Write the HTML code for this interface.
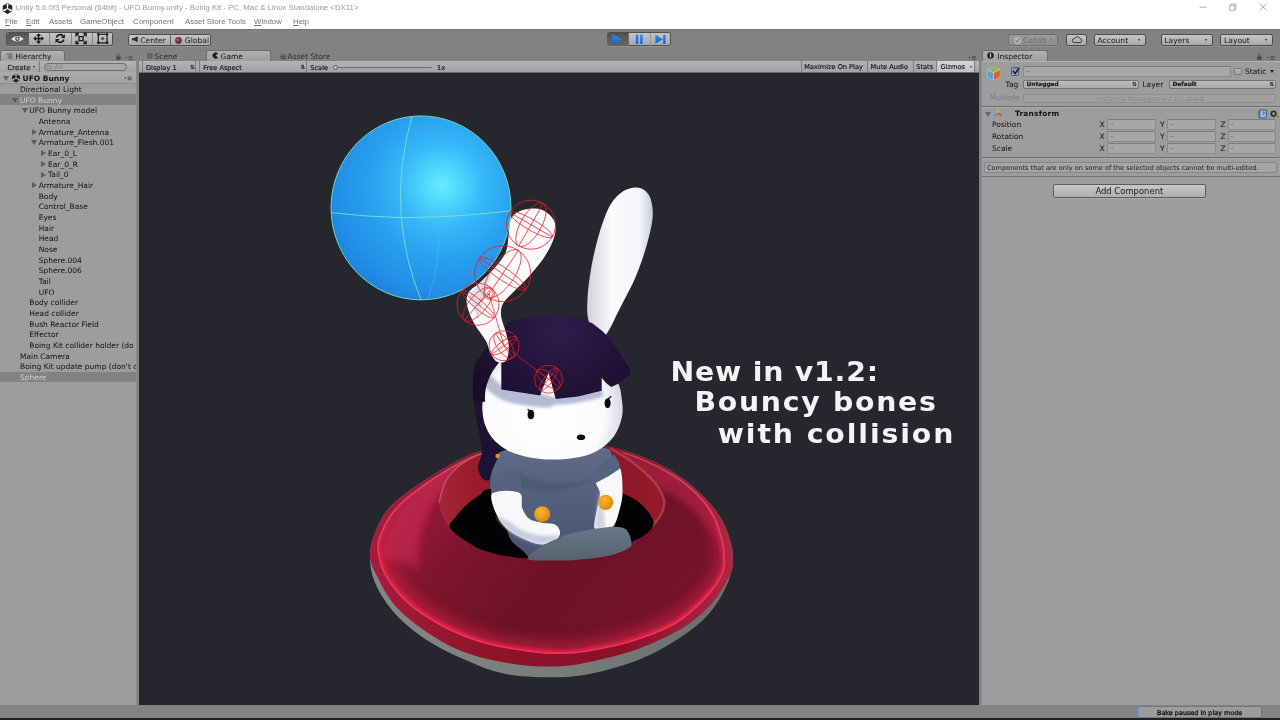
<!DOCTYPE html>
<html lang="en">
<head>
<meta charset="utf-8">
<title>Unity 5.6.0f3 Personal (64bit) - UFO Bunny.unity - Boing Kit</title>
<style>
html,body{margin:0;padding:0}
body{width:1280px;height:720px;overflow:hidden;position:relative;background:#828282;
  font-family:"DejaVu Sans","Liberation Sans",sans-serif;font-size:7.5px;color:#101010;line-height:1;filter:blur(0.35px)}
#root{position:absolute;left:0;top:0;width:1280px;height:720px;will-change:transform;opacity:.999}
.a{position:absolute;white-space:nowrap}
/* window title + menu */
#titlebar{left:0;top:0;width:1280px;height:28.5px;background:#fff}
#title{left:15.5px;top:3px;font-family:"Liberation Sans",sans-serif;font-size:7.84px;color:#9a9a9a;letter-spacing:0px;line-height:10px}
.menu{top:16.5px;font-family:"Liberation Sans",sans-serif;font-size:7.85px;color:#727272;line-height:10px}
.menu u{text-decoration-thickness:0.6px;text-underline-offset:1px}
/* toolbar */
.btn{box-sizing:border-box;border:0.7px solid #4e4e4e;border-radius:2.2px;
  background:linear-gradient(#c6c6c6,#a8a8a8);box-shadow:0 0.6px 0 rgba(255,255,255,.25)}
.btn.on{background:linear-gradient(#5e5e5e,#6b6b6b)}
.tbtxt{font-size:7.6px;line-height:10px;color:#161616}
/* panels */
.panel{background:#9d9d9d}
.tab{box-sizing:border-box;height:11px;border:0.7px solid #6d6d6d;border-bottom:none;border-radius:2.5px 2.5px 0 0;
  background:linear-gradient(#b1b1b1,#9f9f9f)}
.tabtxt{font-size:7.5px;line-height:10px;color:#141414}
.tabtxt.off{color:#2e2e2e}
.ptool{height:11.8px;background:linear-gradient(#b4b4b4,#a2a2a2);border-bottom:0.7px solid #6c6c6c;box-sizing:border-box}
.mini{font-size:6.6px;line-height:9px;color:#141414;-webkit-text-stroke:0.18px #222}
.sep{width:0.7px;background:#7c7c7c;height:10.5px}
/* hierarchy */
.row{left:0;width:136px;height:10.67px}
.row span{position:absolute;top:1.2px;line-height:10.67px;font-size:7.5px;white-space:nowrap}
.sel{background:#828282}
.sel span{color:#d0d0d0}
.tri{position:absolute;width:0;height:0}
.tri.d{border-left:3px solid transparent;border-right:3px solid transparent;border-top:5px solid #5a5a5a}
.tri.r{border-top:3px solid transparent;border-bottom:3px solid transparent;border-left:5px solid #5e5e5e}
/* inspector */
.fld{box-sizing:border-box;border:0.7px solid #8b8b8b;border-top-color:#7c7c7c;background:#a7a7a7;height:10.4px}
.dd{box-sizing:border-box;border:0.7px solid #747474;border-radius:2px;background:linear-gradient(#bdbdbd,#a9a9a9);height:9.6px}
.lab{font-size:7.5px;line-height:10px;color:#111}
</style>
</head>
<body>
<div id="root">

<!-- ===== Window title bar + menu ===== -->
<div class="a" id="titlebar"></div>
<svg class="a" style="left:1px;top:2px" width="13" height="13" viewBox="0 0 26 26">
  <path d="M13 2 L22.5 7.5 L22.5 18.5 L13 24 L3.5 18.5 L3.5 7.5 Z" fill="#222"/>
  <path d="M13 13 L13 3.5 M13 13 L21 17.6 M13 13 L5 17.6" stroke="#fff" stroke-width="2.2" fill="none"/>
  <path d="M13 3.5 l-2.6 3.6 M13 3.5 l2.6 3.6 M21 17.6 l-4.4 -.3 M21 17.6 l-1.8 -4 M5 17.6 l4.4 -.3 M5 17.6 l1.8 -4" stroke="#fff" stroke-width="1.6"/>
</svg>
<div class="a" id="title">Unity 5.6.0f3 Personal (64bit) - UFO Bunny.unity - Boing Kit - PC, Mac &amp; Linux Standalone &lt;DX11&gt;</div>
<div class="a menu" style="left:5px"><u>F</u>ile</div>
<div class="a menu" style="left:26px"><u>E</u>dit</div>
<div class="a menu" style="left:49px">Assets</div>
<div class="a menu" style="left:80px">GameObject</div>
<div class="a menu" style="left:133px">Component</div>
<div class="a menu" style="left:185px">Asset Store Tools</div>
<div class="a menu" style="left:254px"><u>W</u>indow</div>
<div class="a menu" style="left:293px"><u>H</u>elp</div>
<!-- window controls -->
<svg class="a" style="left:1190px;top:0" width="90" height="16" viewBox="0 0 90 16">
  <path d="M9.5 7.2 h7" stroke="#a8a8a8" stroke-width="0.9"/>
  <path d="M39.5 5.5 h5 v5 h-5 z M41 5.5 v-1.5 h5 v5 h-1.5" stroke="#a0a0a0" stroke-width="0.8" fill="none"/>
  <path d="M70 3.8 l6.5 6.5 M76.5 3.8 l-6.5 6.5" stroke="#9a9a9a" stroke-width="0.9"/>
</svg>

<!-- ===== Main toolbar ===== -->
<div class="a" style="left:0;top:28.5px;width:1280px;height:0.8px;background:#777"></div>
<!-- transform tools -->
<div class="a btn" style="left:6.4px;top:32.3px;width:106.4px;height:13.8px"></div>
<div class="a" style="left:6.9px;top:32.8px;width:21.8px;height:12.8px;border-radius:2px 0 0 2px;background:linear-gradient(#545454,#676767)"></div>
<div class="a" style="left:49.3px;top:33px;width:0.7px;height:12.4px;background:#858585"></div>
<div class="a" style="left:71px;top:33px;width:0.7px;height:12.4px;background:#858585"></div>
<div class="a" style="left:92.3px;top:33px;width:0.7px;height:12.4px;background:#858585"></div>
<svg class="a" style="left:6.4px;top:32.3px" width="106.4" height="13.8" viewBox="0 0 106.4 13.8">
  <!-- eye (view tool, active) -->
  <path d="M5.2 6.9 Q11.4 1.3 17.6 6.9 Q11.4 12.3 5.2 6.9 Z" fill="#ececec"/>
  <circle cx="11.4" cy="6.8" r="2.4" fill="#555"/><circle cx="11.4" cy="6.8" r="1" fill="#e4e4e4"/>
  <!-- move -->
  <g fill="#1a1a1a">
    <rect x="28.4" y="5.85" width="8.4" height="1.5"/><rect x="31.85" y="2.4" width="1.5" height="8.4"/>
    <path d="M32.6 1.3 l-2.4 2.6 h4.8z M32.6 11.9 l-2.4 -2.6 h4.8z M27.3 6.6 l2.6 -2.4 v4.8z M37.9 6.6 l-2.6 -2.4 v4.8z"/>
  </g>
  <!-- rotate -->
  <g stroke="#1a1a1a" stroke-width="1.7" fill="none">
    <path d="M50.4 5.4 A4 4 0 0 1 57 3.8"/><path d="M58 7.6 A4 4 0 0 1 51.4 9.2"/>
  </g>
  <path d="M58.9 1.9 v4 h-4z M49.5 11.1 v-4 h4z" fill="#1a1a1a"/>
  <!-- scale -->
  <g stroke="#1a1a1a" fill="none">
    <rect x="73.1" y="4.6" width="4" height="4" stroke-width="1.3"/>
    <path d="M72.4 3.9 l-1.7 -1.7 M77.8 3.9 l1.7 -1.7 M72.4 9.3 l-1.7 1.7 M77.8 9.3 l1.7 1.7" stroke-width="1.3"/>
    <path d="M70 4.4 v-2.9 h2.9 M80.2 4.4 v-2.9 h-2.9 M70 8.8 v2.9 h2.9 M80.2 8.8 v2.9 h-2.9" stroke-width="1.3"/>
  </g>
  <!-- rect -->
  <rect x="92.3" y="2.3" width="8.8" height="8.6" fill="none" stroke="#1a1a1a" stroke-width="1.2"/>
  <circle cx="96.7" cy="6.6" r="1.7" fill="#5a5a5a"/>
  <g fill="#1a1a1a"><rect x="91.2" y="1.2" width="2.2" height="2.2"/><rect x="100" y="1.2" width="2.2" height="2.2"/><rect x="91.2" y="9.8" width="2.2" height="2.2"/><rect x="100" y="9.8" width="2.2" height="2.2"/></g>
</svg>
<!-- pivot buttons -->
<div class="a btn" style="left:127.5px;top:33.8px;width:83.6px;height:12px"></div>
<div class="a" style="left:169.7px;top:34.3px;width:0.7px;height:11px;background:#666"></div>
<svg class="a" style="left:130px;top:35px" width="10" height="9" viewBox="0 0 10 9"><path d="M2 3 h2.4 l2.6 -1.8 v6 l-2.6 -1.8 h-2.4z" fill="#333"/><path d="M7.6 2 v4.6" stroke="#333" stroke-width="0.9"/></svg>
<div class="a tbtxt" style="left:140.3px;top:35.5px">Center</div>
<svg class="a" style="left:173.6px;top:35.5px" width="9" height="9" viewBox="0 0 9 9"><circle cx="4.5" cy="4.5" r="3.4" fill="#7c2c38"/><circle cx="3.6" cy="3.6" r="1.6" fill="#9a5560"/></svg>
<div class="a tbtxt" style="left:184.8px;top:35.5px">Global</div>
<!-- play controls -->
<div class="a btn" style="left:606.8px;top:32.1px;width:63.8px;height:14.4px"></div>
<div class="a" style="left:607.2px;top:32.5px;width:20.8px;height:13.6px;border-radius:2px 0 0 2px;background:linear-gradient(#505050,#666)"></div>
<div class="a" style="left:628px;top:32.6px;width:0.7px;height:13.4px;background:#6a6a6a"></div>
<div class="a" style="left:649.6px;top:32.8px;width:0.7px;height:13px;background:#949494"></div>
<svg class="a" style="left:606.8px;top:32.3px" width="64" height="14.4" viewBox="0 0 64 14.4">
  <defs><linearGradient id="gPl" x1="0" y1="0" x2="0" y2="1"><stop offset="0" stop-color="#2a8cff"/><stop offset="1" stop-color="#1560dc"/></linearGradient></defs>
  <path d="M5.3 2.3 L15.4 7.2 L5.3 12.1 Z" fill="url(#gPl)"/>
  <rect x="28.8" y="2.6" width="2.6" height="9.2" fill="url(#gPl)"/><rect x="33.2" y="2.6" width="2.4" height="9.2" fill="url(#gPl)"/>
  <path d="M48.4 2.6 L56 7.2 L48.4 11.8 Z" fill="url(#gPl)"/><rect x="56.2" y="2.6" width="2.4" height="9.2" fill="url(#gPl)"/>
</svg>
<!-- right side buttons -->
<div class="a btn" style="left:1007.5px;top:33.8px;width:50.5px;height:12px;background:linear-gradient(#9a9a9a,#8e8e8e);border-color:#6f6f6f"></div>
<svg class="a" style="left:1012.5px;top:35.5px" width="9" height="9" viewBox="0 0 9 9"><circle cx="4.5" cy="4.5" r="3.7" fill="#b4b4b4"/><path d="M2.6 4.4 l1.5 1.6 l2.6 -3.4" stroke="#808080" stroke-width="1.2" fill="none"/></svg>
<div class="a tbtxt" style="left:1023px;top:35.5px;color:#6f6f6f">Collab</div>
<div class="a tri d" style="left:1050px;top:39.3px;border-left-width:1.8px;border-right-width:1.8px;border-top-width:2.6px;border-top-color:#6f6f6f"></div>
<div class="a btn" style="left:1065.6px;top:33.8px;width:21.6px;height:12px"></div>
<svg class="a" style="left:1070.5px;top:35px" width="12" height="9" viewBox="0 0 12 9"><path d="M3.2 7.6 H9 A2 2 0 0 0 9.2 3.7 A3 3 0 0 0 3.6 3.6 A2 2 0 0 0 3.2 7.6 Z" fill="none" stroke="#2a2a2a" stroke-width="0.9"/></svg>
<div class="a btn" style="left:1093.6px;top:33.8px;width:52.6px;height:12px"></div>
<div class="a tbtxt" style="left:1097.5px;top:35.5px">Account</div>
<div class="a tri d" style="left:1138px;top:38.6px;border-left-width:1.7px;border-right-width:1.7px;border-top-width:2.4px;border-top-color:#222"></div>
<div class="a btn" style="left:1160.5px;top:33.8px;width:52.6px;height:12px"></div>
<div class="a tbtxt" style="left:1164.3px;top:35.5px">Layers</div>
<div class="a tri d" style="left:1204.6px;top:38.6px;border-left-width:1.7px;border-right-width:1.7px;border-top-width:2.4px;border-top-color:#222"></div>
<div class="a btn" style="left:1220px;top:33.8px;width:53px;height:12px"></div>
<div class="a tbtxt" style="left:1224px;top:35.5px">Layout</div>
<div class="a tri d" style="left:1264.6px;top:38.6px;border-left-width:1.7px;border-right-width:1.7px;border-top-width:2.4px;border-top-color:#222"></div>

<!--TOOLBAR_END-->

<!-- ===== Hierarchy panel ===== -->
<div class="a tab" style="left:0;top:50.3px;width:65px"></div>
<svg class="a" style="left:5.5px;top:52.6px" width="7" height="7" viewBox="0 0 7 7"><path d="M0.4 1 h6.2 M1.6 3 h5 M1.6 5 h5" stroke="#555" stroke-width="1"/></svg>
<div class="a tabtxt" style="left:15.3px;top:52.2px">Hierarchy</div>
<svg class="a" style="left:115px;top:53px" width="22" height="8" viewBox="0 0 22 8"><rect x="1.2" y="3.4" width="4.4" height="3.4" fill="#4a4a4a"/><path d="M2.2 3.4 v-1 a1.2 1.2 0 0 1 2.4 0 v1" fill="none" stroke="#4a4a4a" stroke-width="0.8"/><path d="M10 4.2 l1.2 1.4 l1.2 -1.4z" fill="#444"/><path d="M13.6 3.6 h4 M13.6 5 h4 M13.6 6.4 h4" stroke="#4c4c4c" stroke-width="0.8"/></svg>
<div class="a panel" style="left:0;top:61px;width:136px;height:643.5px"></div>
<div class="a" style="left:136px;top:61px;width:0.8px;height:643.5px;background:#8c8c8c"></div>
<div class="a ptool" style="left:0;top:61px;width:136px"></div>
<div class="a mini" style="left:7.5px;top:63.6px;font-size:6.9px">Create</div>
<div class="a tri d" style="left:32.6px;top:66.2px;border-left-width:1.5px;border-right-width:1.5px;border-top-width:2.2px;border-top-color:#333"></div>
<div class="a sep" style="left:38.6px;top:61.3px"></div>
<div class="a" style="left:43.6px;top:62.5px;width:83.5px;height:8.8px;box-sizing:border-box;border:0.7px solid #6e6e6e;border-radius:4.2px;background:#a9a9a9"></div>
<svg class="a" style="left:46px;top:63.8px" width="9" height="7" viewBox="0 0 9 7"><circle cx="2.6" cy="2.8" r="1.7" fill="none" stroke="#7a7a7a" stroke-width="0.7"/><path d="M3.8 4 l1.4 1.6" stroke="#7a7a7a" stroke-width="0.7"/><path d="M5.6 2.4 l1 1.3 l1 -1.3z" fill="#7a7a7a"/></svg>
<div class="a mini" style="left:54.6px;top:62.6px;color:#838383;font-size:6.9px;-webkit-text-stroke:0">All</div>
<div class="a" style="left:0;top:72.3px;width:136px;height:11.6px;background:linear-gradient(#ababab,#a3a3a3);border-bottom:0.6px solid #8c8c8c;box-sizing:border-box"></div>
<div class="a tri d" style="left:3px;top:75.8px;border-top-color:#666"></div>
<svg class="a" style="left:11.4px;top:72.8px" width="10" height="10.4" viewBox="0 0 26 27"><path d="M13 2 L23 7.8 L23 19.2 L13 25 L3 19.2 L3 7.8 Z" fill="#1c1c1c"/><path d="M13 13.5 L13 3.6 M13 13.5 L21.6 18.4 M13 13.5 L4.4 18.4" stroke="#c8c8c8" stroke-width="2.4" fill="none"/><path d="M13 3.6 l-2.8 3.8 M13 3.6 l2.8 3.8 M21.6 18.4 l-4.6 -.4 M21.6 18.4 l-1.9 -4.2 M4.4 18.4 l4.6 -.4 M4.4 18.4 l1.9 -4.2" stroke="#c8c8c8" stroke-width="1.7"/></svg>
<div class="a" style="left:22.6px;top:74px;font-weight:bold;font-size:7.5px;line-height:10.67px">UFO Bunny</div>
<svg class="a" style="left:122.5px;top:75.6px" width="10" height="5" viewBox="0 0 10 5"><path d="M1 1.4 l1.2 1.5 l1.2 -1.5z" fill="#444"/><path d="M4.6 0.9 h4 M4.6 2.3 h4 M4.6 3.7 h4" stroke="#4c4c4c" stroke-width="0.8"/></svg>
<div class="a row" style="top:83.70px;overflow:hidden"><span style="left:20.0px">Directional Light</span></div>
<div class="a row sel" style="top:94.37px;overflow:hidden"><i class="tri d" style="left:12.4px;top:3.4px"></i><span style="left:20.0px">UFO Bunny</span></div>
<div class="a row" style="top:105.03px;overflow:hidden"><i class="tri d" style="left:21.7px;top:3.4px"></i><span style="left:29.3px">UFO Bunny model</span></div>
<div class="a row" style="top:115.70px;overflow:hidden"><span style="left:38.7px">Antenna</span></div>
<div class="a row" style="top:126.37px;overflow:hidden"><i class="tri r" style="left:31.7px;top:2.6px"></i><span style="left:38.7px">Armature_Antenna</span></div>
<div class="a row" style="top:137.04px;overflow:hidden"><i class="tri d" style="left:31.1px;top:3.4px"></i><span style="left:38.7px">Armature_Flesh.001</span></div>
<div class="a row" style="top:147.70px;overflow:hidden"><i class="tri r" style="left:41.0px;top:2.6px"></i><span style="left:48.0px">Ear_0_L</span></div>
<div class="a row" style="top:158.37px;overflow:hidden"><i class="tri r" style="left:41.0px;top:2.6px"></i><span style="left:48.0px">Ear_0_R</span></div>
<div class="a row" style="top:169.04px;overflow:hidden"><i class="tri r" style="left:41.0px;top:2.6px"></i><span style="left:48.0px">Tail_0</span></div>
<div class="a row" style="top:179.70px;overflow:hidden"><i class="tri r" style="left:31.7px;top:2.6px"></i><span style="left:38.7px">Armature_Hair</span></div>
<div class="a row" style="top:190.37px;overflow:hidden"><span style="left:38.7px">Body</span></div>
<div class="a row" style="top:201.04px;overflow:hidden"><span style="left:38.7px">Control_Base</span></div>
<div class="a row" style="top:211.70px;overflow:hidden"><span style="left:38.7px">Eyes</span></div>
<div class="a row" style="top:222.37px;overflow:hidden"><span style="left:38.7px">Hair</span></div>
<div class="a row" style="top:233.04px;overflow:hidden"><span style="left:38.7px">Head</span></div>
<div class="a row" style="top:243.70px;overflow:hidden"><span style="left:38.7px">Nose</span></div>
<div class="a row" style="top:254.37px;overflow:hidden"><span style="left:38.7px">Sphere.004</span></div>
<div class="a row" style="top:265.04px;overflow:hidden"><span style="left:38.7px">Sphere.006</span></div>
<div class="a row" style="top:275.71px;overflow:hidden"><span style="left:38.7px">Tail</span></div>
<div class="a row" style="top:286.37px;overflow:hidden"><span style="left:38.7px">UFO</span></div>
<div class="a row" style="top:297.04px;overflow:hidden"><span style="left:29.3px">Body collider</span></div>
<div class="a row" style="top:307.71px;overflow:hidden"><span style="left:29.3px">Head collider</span></div>
<div class="a row" style="top:318.37px;overflow:hidden"><span style="left:29.3px">Bush Reactor Field</span></div>
<div class="a row" style="top:329.04px;overflow:hidden"><span style="left:29.3px">Effector</span></div>
<div class="a row" style="top:339.71px;overflow:hidden"><span style="left:29.3px">Boing Kit collider holder (do</span></div>
<div class="a row" style="top:350.38px;overflow:hidden"><span style="left:20.0px">Main Camera</span></div>
<div class="a row" style="top:361.04px;overflow:hidden"><span style="left:20.0px">Boing Kit update pump (don&#39;t c</span></div>
<div class="a row sel" style="top:371.71px;overflow:hidden"><span style="left:20.0px">Sphere</span></div>
<!--HIERARCHY_END-->

<!-- ===== Scene / Game / Asset Store tabs ===== -->
<svg class="a" style="left:146.4px;top:52.4px" width="8" height="8" viewBox="0 0 8 8"><path d="M1 2.4 h6 M1 4 h6 M1 5.6 h6 M2.4 1 v6 M4 1 v6 M5.6 1 v6" stroke="#5a5a5a" stroke-width="0.7"/></svg>
<div class="a tabtxt off" style="left:154.5px;top:52.2px">Scene</div>
<div class="a tab" style="left:205.6px;top:50.3px;width:65.2px"></div>
<svg class="a" style="left:211.6px;top:52.4px" width="7" height="7" viewBox="0 0 7 7"><path d="M6 1.6 A3 3 0 1 0 6 5.4 L3.6 3.5 Z" fill="#1e1e1e"/></svg>
<div class="a tabtxt" style="left:220.6px;top:52.2px">Game</div>
<svg class="a" style="left:278.6px;top:52.6px" width="9" height="8" viewBox="0 0 9 8"><path d="M1 2.6 h6.6 l-0.8 4 h-5z" fill="#585858"/><path d="M2.8 2.6 a1.5 1.6 0 0 1 3 0" fill="none" stroke="#585858" stroke-width="0.8"/></svg>
<div class="a tabtxt off" style="left:287.6px;top:52.2px">Asset Store</div>
<svg class="a" style="left:966px;top:54.6px" width="12" height="6" viewBox="0 0 12 6"><path d="M2.4 2 l1.2 1.5 l1.2 -1.5z" fill="#444"/><path d="M6 1.4 h4 M6 2.8 h4 M6 4.2 h4" stroke="#4c4c4c" stroke-width="0.8"/></svg>
<!-- game toolbar -->
<div class="a ptool" style="left:139px;top:61px;width:840px"></div>
<div class="a sep" style="left:142.3px;top:61.3px"></div>
<div class="a mini" style="left:146px;top:63.5px">Display 1</div>
<div class="a mini" style="left:190px;top:63.3px;font-size:5.6px;color:#333">&#8645;</div>
<div class="a sep" style="left:195.3px;top:61.3px"></div>
<div class="a sep" style="left:198.8px;top:61.3px"></div>
<div class="a mini" style="left:203.3px;top:63.5px">Free Aspect</div>
<div class="a mini" style="left:300.6px;top:63.3px;font-size:5.6px;color:#333">&#8645;</div>
<div class="a sep" style="left:305.6px;top:61.3px"></div>
<div class="a mini" style="left:310.3px;top:63.5px">Scale</div>
<div class="a" style="left:335px;top:66.9px;width:97px;height:1.4px;background:#6e6e6e;border-radius:1px"></div>
<div class="a" style="left:332.6px;top:64.7px;width:5.6px;height:5.6px;box-sizing:border-box;border:0.7px solid #5a5a5a;border-radius:50%;background:#c4c4c4"></div>
<div class="a mini" style="left:437px;top:63.5px">1x</div>
<div class="a sep" style="left:800.6px;top:61.3px"></div>
<div class="a mini" style="left:804.3px;top:63.1px">Maximize On Play</div>
<div class="a sep" style="left:867px;top:61.3px"></div>
<div class="a mini" style="left:870.6px;top:63.1px">Mute Audio</div>
<div class="a sep" style="left:912.6px;top:61.3px"></div>
<div class="a mini" style="left:916.3px;top:63.1px">Stats</div>
<div class="a" style="left:936px;top:61px;width:39.4px;height:10.7px;background:linear-gradient(#d4d4d4,#c2c2c2);border-left:0.7px solid #7c7c7c;border-right:0.7px solid #7c7c7c;box-sizing:border-box"></div>
<div class="a mini" style="left:940.6px;top:63.1px">Gizmos</div>
<div class="a tri d" style="left:969.8px;top:65.8px;border-left-width:1.5px;border-right-width:1.5px;border-top-width:2.2px;border-top-color:#333"></div>
<!-- game viewport -->
<div class="a" style="left:139px;top:72.5px;width:840px;height:632.2px;background:#26262f"></div>
<svg class="a" id="game" style="left:139px;top:72.3px" width="840" height="632.4" viewBox="139 72.3 840 632.4">
<!--ART_BEGIN-->
<defs>
<radialGradient id="gSph" cx="442" cy="186" r="118" gradientUnits="userSpaceOnUse">
 <stop offset="0" stop-color="#66ecff"/><stop offset=".14" stop-color="#52d8fe"/><stop offset=".36" stop-color="#35b8f8"/><stop offset=".62" stop-color="#29a0f0"/><stop offset=".88" stop-color="#2290e8"/><stop offset="1" stop-color="#1e86de"/>
</radialGradient>
<linearGradient id="gUfo" x1="410" y1="470" x2="640" y2="650" gradientUnits="userSpaceOnUse">
 <stop offset="0" stop-color="#a21c3e"/><stop offset=".3" stop-color="#7e152c"/><stop offset=".6" stop-color="#6c1226"/><stop offset="1" stop-color="#74132a"/>
</linearGradient>
<linearGradient id="gBand" x1="380" y1="0" x2="730" y2="0" gradientUnits="userSpaceOnUse">
 <stop offset="0" stop-color="#a41c3a"/><stop offset=".3" stop-color="#8e1428"/><stop offset=".7" stop-color="#8a1226"/><stop offset="1" stop-color="#ac2646"/>
</linearGradient>
<linearGradient id="gWall" x1="440" y1="0" x2="666" y2="0" gradientUnits="userSpaceOnUse">
 <stop offset="0" stop-color="#a42638"/><stop offset=".15" stop-color="#9a1c2c"/><stop offset=".8" stop-color="#8e1626"/><stop offset="1" stop-color="#961a2a"/>
</linearGradient>
<linearGradient id="gFace" x1="0" y1="545" x2="0" y2="660" gradientUnits="userSpaceOnUse">
 <stop offset="0" stop-color="#741226"/><stop offset=".55" stop-color="#7e152a"/><stop offset="1" stop-color="#a81c37"/>
</linearGradient>
<linearGradient id="gBase" x1="380" y1="0" x2="730" y2="0" gradientUnits="userSpaceOnUse">
 <stop offset="0" stop-color="#828684"/><stop offset=".5" stop-color="#787c7a"/><stop offset="1" stop-color="#6a6e6c"/>
</linearGradient>
<linearGradient id="gEarR" x1="590" y1="0" x2="652" y2="0" gradientUnits="userSpaceOnUse">
 <stop offset="0" stop-color="#d4d6e0"/><stop offset=".35" stop-color="#fbfbfd"/><stop offset=".8" stop-color="#f4f5fa"/><stop offset="1" stop-color="#c9cde0"/>
</linearGradient>
<radialGradient id="gHead" cx="545" cy="415" r="85" gradientUnits="userSpaceOnUse">
 <stop offset="0" stop-color="#ffffff"/><stop offset=".7" stop-color="#fbfbfd"/><stop offset="1" stop-color="#c9cce0"/>
</radialGradient>
<radialGradient id="gHair" cx="560" cy="330" r="95" gradientUnits="userSpaceOnUse">
 <stop offset="0" stop-color="#2f1c4c"/><stop offset=".55" stop-color="#23143a"/><stop offset="1" stop-color="#190e2a"/>
</radialGradient>
<linearGradient id="gShirt" x1="0" y1="450" x2="0" y2="555" gradientUnits="userSpaceOnUse">
 <stop offset="0" stop-color="#5d6b89"/><stop offset=".5" stop-color="#535f7b"/><stop offset="1" stop-color="#485470"/>
</linearGradient>
<linearGradient id="gCons" x1="0" y1="527" x2="0" y2="560" gradientUnits="userSpaceOnUse">
 <stop offset="0" stop-color="#6a7788"/><stop offset="1" stop-color="#56626f"/>
</linearGradient>
<linearGradient id="gGlowS" x1="0" y1="446" x2="0" y2="600" gradientUnits="userSpaceOnUse">
 <stop offset="0" stop-color="#d83a5c" stop-opacity=".25"/><stop offset=".4" stop-color="#dc2a50" stop-opacity=".55"/><stop offset=".75" stop-color="#e8244c" stop-opacity="1"/><stop offset="1" stop-color="#ff2a52"/>
</linearGradient>
<linearGradient id="gGlowL" x1="0" y1="446" x2="0" y2="600" gradientUnits="userSpaceOnUse">
 <stop offset="0" stop-color="#d8667e" stop-opacity=".55"/><stop offset=".4" stop-color="#e4506e" stop-opacity=".75"/><stop offset=".72" stop-color="#f43058" stop-opacity="1"/><stop offset="1" stop-color="#f62e56"/>
</linearGradient>
<radialGradient id="gOr" cx=".4" cy=".35" r=".7"><stop offset="0" stop-color="#ffb52e"/><stop offset="1" stop-color="#d8860f"/></radialGradient>
<filter id="bl1" x="-10%" y="-10%" width="120%" height="120%"><feGaussianBlur stdDeviation="1.6"/></filter>
<filter id="bl2" x="-10%" y="-10%" width="120%" height="120%"><feGaussianBlur stdDeviation="3"/></filter>
<filter id="bl3" x="-10%" y="-10%" width="120%" height="120%"><feGaussianBlur stdDeviation="6"/></filter>
<filter id="bl05" x="-5%" y="-5%" width="110%" height="110%"><feGaussianBlur stdDeviation="0.5"/></filter>
</defs>
<path d="M370.0 556.0 C370.0 548.2 371.7 542.0 374.4 534.7 C377.1 527.4 381.7 518.1 386.0 512.0 C390.3 505.9 394.9 502.7 400.0 498.3 C405.1 493.9 411.1 489.7 416.7 485.8 C422.2 481.9 427.8 478.5 433.3 475.0 C438.9 471.5 444.4 468.1 450.0 465.0 C455.6 461.9 461.2 459.0 466.7 456.7 C472.1 454.4 474.6 452.5 482.7 451.0 C490.8 449.5 504.1 448.3 515.0 447.5 C525.9 446.7 537.2 446.6 548.0 446.3 C558.8 446.1 570.0 445.9 580.0 446.0 C590.0 446.1 597.7 444.9 608.0 446.7 C618.3 448.5 630.5 452.3 641.7 456.7 C652.9 461.1 665.3 467.2 675.0 473.3 C684.7 479.4 692.5 486.1 700.0 493.3 C707.5 500.5 715.0 508.9 720.0 516.7 C725.0 524.5 727.8 532.8 730.0 540.0 C732.2 547.2 733.5 552.5 733.0 560.0 C732.5 567.5 731.0 576.0 727.0 585.0 C723.0 594.0 716.8 605.2 709.0 614.0 C701.2 622.8 691.5 630.4 680.0 638.0 C668.5 645.6 654.5 653.6 640.0 659.5 C625.5 665.4 607.2 670.5 593.0 673.5 C578.8 676.5 569.8 677.4 555.0 677.5 C540.2 677.6 520.1 677.2 504.4 674.0 C488.7 670.8 474.8 664.6 461.0 658.4 C447.2 652.2 432.8 644.7 421.4 636.8 C410.0 628.9 400.3 620.2 392.5 611.0 C384.7 601.8 378.1 590.8 374.4 581.6 C370.6 572.4 370.0 563.8 370.0 556.0Z" fill="url(#gBase)"/>
<path d="M370.0 556.0 C369.7 549.4 371.7 542.0 374.4 534.7 C377.1 527.4 381.7 518.1 386.0 512.0 C390.3 505.9 394.9 502.7 400.0 498.3 C405.1 493.9 411.1 489.7 416.7 485.8 C422.2 481.9 427.8 478.5 433.3 475.0 C438.9 471.5 444.4 468.1 450.0 465.0 C455.6 461.9 461.2 459.0 466.7 456.7 C472.1 454.4 474.6 452.5 482.7 451.0 C490.8 449.5 504.1 448.3 515.0 447.5 C525.9 446.7 537.2 446.6 548.0 446.3 C558.8 446.1 570.0 445.9 580.0 446.0 C590.0 446.1 597.7 444.9 608.0 446.7 C618.3 448.5 630.5 452.3 641.7 456.7 C652.9 461.1 665.3 467.2 675.0 473.3 C684.7 479.4 692.5 486.1 700.0 493.3 C707.5 500.5 715.0 508.9 720.0 516.7 C725.0 524.5 727.8 532.8 730.0 540.0 C732.2 547.2 732.9 554.3 733.0 560.0 C733.1 565.7 733.9 566.8 730.5 574.0 C727.1 581.2 720.3 594.1 712.5 603.0 C704.7 611.9 695.7 619.9 683.6 627.5 C671.5 635.1 655.1 642.8 640.0 648.5 C624.9 654.2 607.2 658.5 593.0 661.5 C578.8 664.5 568.6 666.4 555.0 666.8 C541.4 667.2 526.1 666.2 511.6 664.0 C497.1 661.8 481.3 658.5 468.0 653.8 C454.7 649.1 444.0 643.6 432.0 635.8 C420.0 628.0 405.3 617.2 396.0 607.0 C386.7 596.8 380.3 582.9 376.0 574.4 C371.7 565.9 370.3 562.6 370.0 556.0Z" fill="url(#gBand)"/>
<clipPath id="cSurf"><path d="M378.0 549.0 C378.6 555.9 380.2 565.5 385.0 574.4 C389.8 583.3 397.3 593.6 407.0 602.3 C416.7 611.0 429.8 619.6 443.0 626.5 C456.2 633.4 471.3 639.4 486.4 643.6 C501.4 647.9 521.0 650.4 533.3 652.0 C545.6 653.6 551.2 653.6 560.0 653.5 C568.8 653.4 573.8 653.6 586.0 651.5 C598.2 649.4 618.0 645.8 633.0 641.0 C648.0 636.2 664.0 630.1 676.0 623.0 C688.0 615.9 697.2 606.8 705.0 598.5 C712.8 590.2 719.4 581.2 722.5 573.0 C725.6 564.8 724.1 556.2 723.5 549.0 C722.9 541.8 721.1 536.2 719.0 530.0 C716.9 523.8 714.7 517.9 711.0 512.0 C707.3 506.1 703.3 500.6 697.0 494.5 C690.7 488.4 682.4 481.4 673.0 475.5 C663.6 469.6 651.3 463.4 640.5 459.0 C629.7 454.6 618.1 451.1 608.0 449.3 C597.9 447.5 590.0 448.4 580.0 448.3 C570.0 448.2 558.8 448.4 548.0 448.6 C537.2 448.9 525.8 449.0 515.0 449.8 C504.2 450.6 491.4 451.9 483.5 453.5 C475.6 455.1 473.0 456.9 467.7 459.3 C462.4 461.7 456.9 464.7 451.5 467.8 C446.1 470.9 440.4 474.5 435.0 478.0 C429.6 481.5 424.3 485.0 419.0 489.0 C413.7 493.0 407.8 497.5 403.0 502.0 C398.2 506.5 394.1 510.8 390.5 516.0 C386.9 521.2 383.6 527.5 381.5 533.0 C379.4 538.5 377.4 542.1 378.0 549.0Z"/></clipPath>
<g clip-path="url(#cSurf)">
<path d="M378.0 549.0 C378.6 555.9 380.2 565.5 385.0 574.4 C389.8 583.3 397.3 593.6 407.0 602.3 C416.7 611.0 429.8 619.6 443.0 626.5 C456.2 633.4 471.3 639.4 486.4 643.6 C501.4 647.9 521.0 650.4 533.3 652.0 C545.6 653.6 551.2 653.6 560.0 653.5 C568.8 653.4 573.8 653.6 586.0 651.5 C598.2 649.4 618.0 645.8 633.0 641.0 C648.0 636.2 664.0 630.1 676.0 623.0 C688.0 615.9 697.2 606.8 705.0 598.5 C712.8 590.2 719.4 581.2 722.5 573.0 C725.6 564.8 724.1 556.2 723.5 549.0 C722.9 541.8 721.1 536.2 719.0 530.0 C716.9 523.8 714.7 517.9 711.0 512.0 C707.3 506.1 703.3 500.6 697.0 494.5 C690.7 488.4 682.4 481.4 673.0 475.5 C663.6 469.6 651.3 463.4 640.5 459.0 C629.7 454.6 618.1 451.1 608.0 449.3 C597.9 447.5 590.0 448.4 580.0 448.3 C570.0 448.2 558.8 448.4 548.0 448.6 C537.2 448.9 525.8 449.0 515.0 449.8 C504.2 450.6 491.4 451.9 483.5 453.5 C475.6 455.1 473.0 456.9 467.7 459.3 C462.4 461.7 456.9 464.7 451.5 467.8 C446.1 470.9 440.4 474.5 435.0 478.0 C429.6 481.5 424.3 485.0 419.0 489.0 C413.7 493.0 407.8 497.5 403.0 502.0 C398.2 506.5 394.1 510.8 390.5 516.0 C386.9 521.2 383.6 527.5 381.5 533.0 C379.4 538.5 377.4 542.1 378.0 549.0Z" fill="url(#gUfo)"/>
<path d="M380 560 Q392 500 452 466 Q500 448 548 447 Q620 446 672 474 Q722 512 728 560 Q700 505 664 492 Q600 455 548 455 Q470 458 440 494 Q420 520 420 570 Z" fill="#b4224a" opacity=".6" filter="url(#bl2)"/>
<path d="M380 556 Q390 505 440 474 Q465 460 492 453 Q458 470 438 496 Q418 522 414 560 Z" fill="#c42c52" opacity=".5" filter="url(#bl2)"/>
<path d="M378.0 549.0 C378.6 555.9 380.2 565.5 385.0 574.4 C389.8 583.3 397.3 593.6 407.0 602.3 C416.7 611.0 429.8 619.6 443.0 626.5 C456.2 633.4 471.3 639.4 486.4 643.6 C501.4 647.9 521.0 650.4 533.3 652.0 C545.6 653.6 551.2 653.6 560.0 653.5 C568.8 653.4 573.8 653.6 586.0 651.5 C598.2 649.4 618.0 645.8 633.0 641.0 C648.0 636.2 664.0 630.1 676.0 623.0 C688.0 615.9 697.2 606.8 705.0 598.5 C712.8 590.2 719.4 581.2 722.5 573.0 C725.6 564.8 724.1 556.2 723.5 549.0 C722.9 541.8 721.1 536.2 719.0 530.0 C716.9 523.8 714.7 517.9 711.0 512.0 C707.3 506.1 703.3 500.6 697.0 494.5 C690.7 488.4 682.4 481.4 673.0 475.5 C663.6 469.6 651.3 463.4 640.5 459.0 C629.7 454.6 618.1 451.1 608.0 449.3 C597.9 447.5 590.0 448.4 580.0 448.3 C570.0 448.2 558.8 448.4 548.0 448.6 C537.2 448.9 525.8 449.0 515.0 449.8 C504.2 450.6 491.4 451.9 483.5 453.5 C475.6 455.1 473.0 456.9 467.7 459.3 C462.4 461.7 456.9 464.7 451.5 467.8 C446.1 470.9 440.4 474.5 435.0 478.0 C429.6 481.5 424.3 485.0 419.0 489.0 C413.7 493.0 407.8 497.5 403.0 502.0 C398.2 506.5 394.1 510.8 390.5 516.0 C386.9 521.2 383.6 527.5 381.5 533.0 C379.4 538.5 377.4 542.1 378.0 549.0Z" fill="none" stroke="url(#gGlowS)" stroke-width="24" opacity=".34" filter="url(#bl3)"/>
<path d="M378.0 549.0 C378.6 555.9 380.2 565.5 385.0 574.4 C389.8 583.3 397.3 593.6 407.0 602.3 C416.7 611.0 429.8 619.6 443.0 626.5 C456.2 633.4 471.3 639.4 486.4 643.6 C501.4 647.9 521.0 650.4 533.3 652.0 C545.6 653.6 551.2 653.6 560.0 653.5 C568.8 653.4 573.8 653.6 586.0 651.5 C598.2 649.4 618.0 645.8 633.0 641.0 C648.0 636.2 664.0 630.1 676.0 623.0 C688.0 615.9 697.2 606.8 705.0 598.5 C712.8 590.2 719.4 581.2 722.5 573.0 C725.6 564.8 724.1 556.2 723.5 549.0 C722.9 541.8 721.1 536.2 719.0 530.0 C716.9 523.8 714.7 517.9 711.0 512.0 C707.3 506.1 703.3 500.6 697.0 494.5 C690.7 488.4 682.4 481.4 673.0 475.5 C663.6 469.6 651.3 463.4 640.5 459.0 C629.7 454.6 618.1 451.1 608.0 449.3 C597.9 447.5 590.0 448.4 580.0 448.3 C570.0 448.2 558.8 448.4 548.0 448.6 C537.2 448.9 525.8 449.0 515.0 449.8 C504.2 450.6 491.4 451.9 483.5 453.5 C475.6 455.1 473.0 456.9 467.7 459.3 C462.4 461.7 456.9 464.7 451.5 467.8 C446.1 470.9 440.4 474.5 435.0 478.0 C429.6 481.5 424.3 485.0 419.0 489.0 C413.7 493.0 407.8 497.5 403.0 502.0 C398.2 506.5 394.1 510.8 390.5 516.0 C386.9 521.2 383.6 527.5 381.5 533.0 C379.4 538.5 377.4 542.1 378.0 549.0Z" fill="none" stroke="url(#gGlowS)" stroke-width="7" opacity=".55" filter="url(#bl1)"/>
</g>
<path d="M378.0 549.0 C378.6 555.9 380.2 565.5 385.0 574.4 C389.8 583.3 397.3 593.6 407.0 602.3 C416.7 611.0 429.8 619.6 443.0 626.5 C456.2 633.4 471.3 639.4 486.4 643.6 C501.4 647.9 521.0 650.4 533.3 652.0 C545.6 653.6 551.2 653.6 560.0 653.5 C568.8 653.4 573.8 653.6 586.0 651.5 C598.2 649.4 618.0 645.8 633.0 641.0 C648.0 636.2 664.0 630.1 676.0 623.0 C688.0 615.9 697.2 606.8 705.0 598.5 C712.8 590.2 719.4 581.2 722.5 573.0 C725.6 564.8 724.1 556.2 723.5 549.0 C722.9 541.8 721.1 536.2 719.0 530.0 C716.9 523.8 714.7 517.9 711.0 512.0 C707.3 506.1 703.3 500.6 697.0 494.5 C690.7 488.4 682.4 481.4 673.0 475.5 C663.6 469.6 651.3 463.4 640.5 459.0 C629.7 454.6 618.1 451.1 608.0 449.3 C597.9 447.5 590.0 448.4 580.0 448.3 C570.0 448.2 558.8 448.4 548.0 448.6 C537.2 448.9 525.8 449.0 515.0 449.8 C504.2 450.6 491.4 451.9 483.5 453.5 C475.6 455.1 473.0 456.9 467.7 459.3 C462.4 461.7 456.9 464.7 451.5 467.8 C446.1 470.9 440.4 474.5 435.0 478.0 C429.6 481.5 424.3 485.0 419.0 489.0 C413.7 493.0 407.8 497.5 403.0 502.0 C398.2 506.5 394.1 510.8 390.5 516.0 C386.9 521.2 383.6 527.5 381.5 533.0 C379.4 538.5 377.4 542.1 378.0 549.0Z" fill="none" stroke="url(#gGlowL)" stroke-width="1.7" filter="url(#bl05)"/>
<path d="M439.0 503.0 C439.3 497.4 442.1 488.8 445.0 483.0 C447.9 477.2 451.7 472.4 456.7 468.0 C461.7 463.6 469.4 459.3 475.0 456.7 C480.6 454.1 478.0 453.8 490.0 452.5 C502.0 451.2 527.0 449.5 547.0 448.8 C567.0 448.1 595.6 445.9 610.0 448.3 C624.4 450.7 625.8 457.5 633.3 463.3 C640.8 469.1 649.9 477.2 655.0 483.3 C660.1 489.4 662.8 495.3 664.0 500.0 C665.2 504.7 664.0 507.8 662.5 511.7 C661.0 515.6 659.9 518.2 655.0 523.3 C650.1 528.3 643.8 536.5 633.0 542.0 C622.2 547.5 607.8 553.2 590.0 556.0 C572.2 558.8 543.2 559.2 526.0 558.5 C508.8 557.8 496.6 554.5 486.7 551.7 C476.8 548.9 472.8 545.7 466.7 541.7 C460.6 537.8 453.9 532.2 450.0 528.0 C446.1 523.8 444.8 520.9 443.0 516.7 C441.2 512.5 438.7 508.6 439.0 503.0Z" fill="url(#gWall)"/>
<path d="M439.0 503.0 C440.0 499.7 442.1 488.8 445.0 483.0 C447.9 477.2 451.7 472.4 456.7 468.0 C461.7 463.6 469.4 459.3 475.0 456.7 C480.6 454.1 487.5 453.2 490.0 452.5" fill="none" stroke="#cc5a6c" stroke-width="1.5" opacity=".8" filter="url(#bl05)"/>
<path d="M610.0 448.3 C613.9 450.8 625.8 457.5 633.3 463.3 C640.8 469.1 649.9 477.2 655.0 483.3 C660.1 489.4 662.8 495.3 664.0 500.0 C665.2 504.7 664.0 507.8 662.5 511.7 C661.0 515.6 659.9 518.2 655.0 523.3 C650.1 528.3 636.7 538.9 633.0 542.0" fill="none" stroke="#c05868" stroke-width="2.6" opacity=".55" filter="url(#bl05)"/>
<path d="M450.0 528.0 C448.1 524.0 452.2 521.8 455.0 518.0 C457.8 514.2 462.5 508.8 466.7 505.0 C470.9 501.2 476.0 497.7 480.0 495.0 C484.0 492.3 479.6 491.3 490.8 489.0 C502.0 486.7 528.8 481.3 547.0 481.0 C565.2 480.7 587.5 484.9 600.0 487.0 C612.5 489.1 614.8 490.3 621.7 493.3 C628.7 496.3 636.4 499.7 641.7 505.0 C647.0 510.3 654.8 518.8 653.3 525.0 C651.8 531.2 643.5 536.8 633.0 542.0 C622.5 547.2 607.8 553.2 590.0 556.0 C572.2 558.8 543.2 559.2 526.0 558.5 C508.8 557.8 496.6 554.5 486.7 551.7 C476.8 548.9 472.8 545.7 466.7 541.7 C460.6 537.8 451.9 532.0 450.0 528.0Z" fill="#040204"/>
<path d="M481.3 359.0 C473.5 358.7 474.2 370.1 473.0 378.0 C471.8 385.9 473.2 397.2 474.2 406.3 C475.2 415.4 477.6 424.7 478.9 432.3 C480.2 439.9 482.1 446.1 482.0 452.0 C481.9 457.9 477.7 463.3 478.0 468.0 C478.3 472.7 481.3 478.3 484.0 480.0 C486.7 481.7 491.3 481.0 494.0 478.0 C496.7 475.0 497.3 468.3 500.0 462.0 C502.7 455.7 506.7 453.7 510.0 440.0 C513.3 426.3 524.8 393.5 520.0 380.0 C515.2 366.5 489.1 359.3 481.3 359.0Z" fill="#1e1133"/>
<path d="M635.7 187.7 C632.1 187.8 627.6 188.8 623.5 191.4 C619.4 194.1 614.9 198.0 611.3 203.6 C607.7 209.2 604.8 216.8 602.0 225.0 C599.2 233.2 596.4 243.9 594.4 252.6 C592.4 261.3 591.0 268.9 589.8 277.0 C588.6 285.1 587.6 294.4 587.4 301.5 C587.1 308.6 586.9 313.4 588.3 319.8 C589.7 326.2 592.9 337.6 596.0 340.0 C599.1 342.4 602.6 339.4 606.7 334.0 C610.8 328.6 615.6 317.1 620.4 307.6 C625.2 298.1 631.4 287.2 635.7 277.0 C640.0 266.8 643.6 256.2 646.4 246.5 C649.2 236.8 651.7 226.7 652.5 219.0 C653.3 211.3 652.3 205.3 651.0 200.6 C649.7 195.9 647.4 193.0 644.9 190.8 C642.4 188.7 639.3 187.6 635.7 187.7Z" fill="url(#gEarR)"/>
<path d="M504.3 450.8 C494.6 453.5 499.2 455.8 497.0 460.0 C494.8 464.2 491.8 471.0 490.8 476.0 C489.8 481.0 490.2 484.0 491.0 490.0 C491.8 496.0 492.8 505.6 495.3 512.0 C497.8 518.4 503.3 523.6 506.0 528.4 C508.7 533.2 508.5 537.1 511.5 541.0 C514.5 544.9 520.8 549.3 524.0 552.0 C527.2 554.7 525.0 556.3 531.0 557.0 C537.0 557.7 548.5 558.0 560.0 556.0 C571.5 554.0 591.0 549.8 600.0 545.0 C609.0 540.2 610.5 534.5 614.0 527.0 C617.5 519.5 619.8 507.8 621.0 500.0 C622.2 492.2 621.2 485.5 621.0 480.0 C620.8 474.5 621.3 471.2 619.8 467.0 C618.3 462.8 614.7 458.2 612.0 455.0 C609.3 451.8 613.1 449.8 603.6 448.0 C594.1 446.2 571.5 443.5 555.0 444.0 C538.5 444.5 514.0 448.1 504.3 450.8Z" fill="url(#gShirt)"/>
<path d="M515 470 Q545 492 596 478 Q560 500 520 488 Z" fill="#465270" opacity=".55" filter="url(#bl1)"/>
<path d="M488.3 362.0 C484.7 370.2 484.6 386.3 483.6 394.5 C482.6 402.7 482.0 405.5 482.4 411.0 C482.8 416.5 483.8 422.5 486.0 427.6 C488.2 432.7 490.7 437.4 495.4 441.7 C500.1 446.0 506.4 450.6 514.3 453.6 C522.2 456.6 532.9 458.7 542.7 459.5 C552.6 460.3 564.4 459.7 573.4 458.3 C582.4 456.9 590.3 454.8 597.0 451.2 C603.7 447.6 609.5 442.5 613.6 437.0 C617.7 431.5 620.4 424.3 621.8 418.0 C623.2 411.7 622.8 405.5 621.8 399.2 C620.8 392.9 621.3 388.2 616.0 380.0 C610.7 371.8 602.7 356.7 590.0 350.0 C577.3 343.3 554.2 340.8 540.0 340.0 C525.8 339.2 513.6 341.3 505.0 345.0 C496.4 348.7 491.9 353.8 488.3 362.0Z" fill="url(#gHead)"/>
<path d="M486 372 L502 386 L541 394 L556 398 L602 390 L603 397 Q575 405 556 405 L548 408 Q528 407 510 403 Q494 398 486 388 Z" fill="#a9b0cc" opacity=".85" filter="url(#bl1)"/>
<path d="M501.3 389.8 L540.3 395.7 L541.5 392 L548.6 373.2 L555.7 399.2 L578 396.9 L601.7 391 L601.7 378 Q606 384 611.2 387.4 Q622 383 629.6 375.4 Q631.6 372.5 630 369.5 Q627 364 623 359 Q618 349 611.2 340.2 Q603 331 592.3 323.6 Q575 316 554.5 315.4 Q540 315.5 526 317.7 Q516 319.5 509 322.3 Q499 331 491 342 Q484.5 349 480.3 356.6 Q475.5 365 474 374.7 Q472.6 388 473 402 L485 402 Q484.6 392 486.6 385.5 Q489 377 493 371 Q497 365 501.3 360 Z" fill="url(#gHair)"/>
<path d="M511.0 219.0 C513.3 215.0 517.6 211.9 522.6 210.4 C527.6 208.9 535.8 208.1 541.0 209.8 C546.2 211.5 551.5 216.2 553.8 220.5 C556.1 224.8 556.1 229.8 554.7 235.7 C553.3 241.5 549.8 248.7 545.5 255.6 C541.2 262.5 534.1 270.9 528.7 277.0 C523.4 283.1 517.7 287.7 513.4 292.3 C509.1 296.9 504.7 300.5 502.7 304.6 C500.7 308.7 500.7 312.2 501.2 316.8 C501.7 321.4 504.4 326.9 505.7 332.0 C507.0 337.1 508.8 342.6 508.8 347.4 C508.9 352.2 508.0 358.6 506.0 361.0 C504.0 363.4 499.6 363.2 497.0 362.0 C494.4 360.8 492.4 356.9 490.5 353.5 C488.6 350.1 488.7 346.4 485.9 341.3 C483.1 336.2 476.8 329.0 473.6 322.9 C470.4 316.8 467.7 309.7 466.9 304.6 C466.1 299.5 466.9 295.9 469.0 292.3 C471.1 288.7 475.5 287.1 479.8 283.0 C484.1 278.9 490.7 273.0 495.0 267.9 C499.3 262.8 503.4 258.2 505.7 252.6 C508.0 247.0 507.9 239.8 508.8 234.2 C509.7 228.6 508.7 223.0 511.0 219.0Z" fill="#fafafc"/>
<path d="M469 296 Q476 286 492 272 Q486 292 478 320 Z" fill="#d5d8e4" opacity=".8" filter="url(#bl05)"/>
<ellipse cx="530.9" cy="414.8" rx="3.3" ry="4.8" fill="#0c0a10"/><path d="M527.6 409.5 l2.6 2.2" stroke="#0c0a10" stroke-width="1.2"/>
<ellipse cx="607.6" cy="403.6" rx="3" ry="4.8" fill="#0c0a10"/><path d="M611.2 396.6 l-4 3.4" stroke="#0c0a10" stroke-width="1.3"/>
<ellipse cx="581" cy="437.6" rx="4.2" ry="2.8" fill="#0c0a10"/>
<path d="M491.7 494.0 C489.9 497.7 492.9 506.3 495.3 512.0 C497.7 517.7 501.2 523.9 506.0 528.4 C510.8 532.9 518.0 536.6 524.0 539.3 C530.0 542.0 536.6 544.7 542.0 544.7 C547.4 544.7 553.6 541.4 556.6 539.3 C559.6 537.2 560.3 534.4 560.0 532.0 C559.7 529.6 558.0 526.3 555.0 524.8 C552.0 523.3 546.2 523.9 542.0 523.0 C537.8 522.1 532.9 521.8 529.6 519.4 C526.3 517.0 523.8 512.8 522.3 508.6 C520.8 504.4 523.2 497.1 520.5 494.0 C517.8 490.9 510.8 490.0 506.0 490.0 C501.2 490.0 493.5 490.3 491.7 494.0Z" fill="#f8f8fb"/>
<path d="M496 516 Q508 538 542 545 Q556 542 559 535 Q530 540 510 522 Z" fill="#bcc1d6" opacity=".8" filter="url(#bl1)"/>
<path d="M596.4 482.4 C597.7 479.4 604.1 478.4 608.0 476.0 C611.9 473.6 617.4 465.0 619.8 468.0 C622.2 471.0 622.8 486.0 622.5 494.0 C622.2 502.0 619.6 510.3 618.0 515.8 C616.4 521.3 615.1 524.5 612.6 527.0 C610.1 529.5 606.0 530.8 603.0 531.0 C600.0 531.2 595.6 531.6 594.5 528.4 C593.4 525.2 595.5 517.7 596.4 512.0 C597.3 506.3 600.0 498.9 600.0 494.0 C600.0 489.1 595.1 485.4 596.4 482.4Z" fill="#f8f8fb"/>
<path d="M595 528 Q597 505 600 490 Q605 510 605 530 Z" fill="#c0c5d8" opacity=".7" filter="url(#bl1)"/>
<path d="M490.8 476 Q489.5 486 491.7 493.5 Q505 489 521 493 Q522 482 519 470 Z" fill="#56637f"/>
<path d="M596 470 Q596 478 596.4 483 Q609 477 620.5 468.5 Q619 460 614 455 Z" fill="#56637f"/>
<circle cx="542.2" cy="514.5" r="8" fill="url(#gOr)"/><circle cx="605.7" cy="502.6" r="7.6" fill="url(#gOr)"/>
<circle cx="497.6" cy="456.2" r="2.2" fill="#e09418"/>
<path d="M527.8 559.0 C526.3 556.6 535.0 550.7 542.2 546.5 C549.4 542.3 560.2 537.1 571.0 533.9 C581.8 530.7 598.3 528.4 607.0 527.5 C615.7 526.6 619.8 527.3 623.4 528.4 C627.0 529.5 627.4 531.5 628.8 533.9 C630.1 536.3 631.5 540.6 631.5 543.0 C631.5 545.4 632.2 546.2 628.8 548.3 C625.3 550.4 619.2 553.5 610.8 555.5 C602.4 557.5 588.3 559.1 578.3 560.0 C568.3 560.9 559.4 561.0 551.0 560.8 C542.6 560.6 529.3 561.4 527.8 559.0Z" fill="url(#gCons)"/>
<ellipse cx="421" cy="208.2" rx="90" ry="92" fill="url(#gSph)"/>
<ellipse cx="421" cy="208.2" rx="90" ry="92" fill="none" stroke="#7fe0b8" stroke-width="1" opacity=".9"/>
<path d="M412 116.5 Q398 165 401 215 Q405 262 421 300" fill="none" stroke="#86e6c6" stroke-width="0.9" opacity=".9"/>
<path d="M331 213 Q366 217 401.5 218 Q460 217.5 511 211" fill="none" stroke="#86e6c6" stroke-width="0.9" opacity=".9"/>
<path d="M438 215 Q442 262 428 299" fill="none" stroke="#4fc0f0" stroke-width="0.8" opacity=".6"/>
<g fill="none" stroke="#ea1c24" stroke-width="0.75" opacity=".95">
<g transform="translate(531 225) rotate(120)"><circle r="24.5"/><ellipse rx="24.5" ry="10.3"/><ellipse rx="5.4" ry="24.5"/><path d="M-24.5 0 H24.5 M0 -24.5 V24.5"/></g>
<g transform="translate(502.7 274) rotate(124)"><circle r="28"/><ellipse rx="28" ry="11.8"/><ellipse rx="6.2" ry="28"/><path d="M-28 0 H28 M0 -28 V28"/></g>
<g transform="translate(478 304.5) rotate(130)"><circle r="21"/><ellipse rx="21" ry="8.8"/><ellipse rx="4.6" ry="21"/><path d="M-21 0 H21 M0 -21 V21"/></g>
<g transform="translate(489 294) rotate(0)"><circle r="5.5"/></g>
<g transform="translate(504 346) rotate(55)"><circle r="15"/><ellipse rx="15" ry="6.8"/><ellipse rx="4.5" ry="15"/><path d="M-15 0 H15 M0 -15 V15"/></g>
<g transform="translate(548.5 379.5) rotate(37)"><circle r="14"/><ellipse rx="14" ry="6.3"/><ellipse rx="4.2" ry="14"/><path d="M-14 0 H14 M0 -14 V14"/></g>
<path d="M489 294 L504 346 L548.5 379.5"/>
<path d="M489 294 L478 304.5" />
</g>
<g font-family="&quot;DejaVu Sans&quot;,&quot;Liberation Sans&quot;,sans-serif" font-weight="bold" fill="#f4f4f4" font-size="26">
<text transform="translate(670.5 380.9) scale(1.09 1)" textLength="190.4" lengthAdjust="spacing">New in v1.2:</text>
<text transform="translate(694.4 411.7) scale(1.09 1)" textLength="221.6" lengthAdjust="spacing">Bouncy bones</text>
<text transform="translate(717.8 443.5) scale(1.09 1)" textLength="216.1" lengthAdjust="spacing">with collision</text>
</g>
<!--ART_END-->
</svg>

<!--GAME_END-->

<!-- ===== Inspector panel ===== -->
<div class="a tab" style="left:982px;top:50.3px;width:65.6px"></div>
<svg class="a" style="left:987.4px;top:52.2px" width="7" height="7" viewBox="0 0 7 7"><circle cx="3.5" cy="3.5" r="3.2" fill="#1c1c1c"/><rect x="2.9" y="1.4" width="1.2" height="4.2" fill="#cfcfcf"/></svg>
<div class="a tabtxt" style="left:997.3px;top:52.2px">Inspector</div>
<svg class="a" style="left:1256px;top:53px" width="22" height="8" viewBox="0 0 22 8"><rect x="1.2" y="3.4" width="4.4" height="3.4" fill="#4a4a4a"/><path d="M2.2 3.4 v-1 a1.2 1.2 0 0 1 2.4 0 v1" fill="none" stroke="#4a4a4a" stroke-width="0.8"/><path d="M10.6 4.2 l1.2 1.4 l1.2 -1.4z" fill="#444"/><path d="M14.2 3.6 h4.4 M14.2 5 h4.4 M14.2 6.4 h4.4" stroke="#4c4c4c" stroke-width="0.8"/></svg>
<div class="a panel" style="left:982px;top:61px;width:298px;height:643.6px"></div>
<div class="a" style="left:982px;top:61px;width:298px;height:0.8px;background:#b0b0b0"></div>
<div class="a" style="left:981.3px;top:61px;width:0.8px;height:643.6px;background:#8e8e8e"></div>
<!-- header: cube icon -->
<svg class="a" style="left:985.6px;top:65.6px" width="15.4" height="15" viewBox="0 0 31 30">
  <path d="M2.5 8 L15.5 2 L28.5 7 L28.5 22 L15 28.5 L2.5 22.5 Z" fill="#d8d8d8"/>
  <path d="M3 8 L15.5 2.4 L28 7.2 L15.2 13.4 Z" fill="#8fba3e"/>
  <path d="M3 8 L15.2 13.4 L15 28 L3 22.2 Z" fill="#4aa6d6"/>
  <path d="M15.2 13.4 L28 7.2 L28 21.8 L15 28 Z" fill="#e2601c"/>
  <path d="M3 8 L15.2 13.4 L28 7.2 M15.2 13.4 L15 28" stroke="#e8e8e8" stroke-width="1.1" fill="none" opacity=".85"/>
</svg>
<div class="a" style="left:1010.6px;top:67.2px;width:8.4px;height:8.4px;box-sizing:border-box;border:0.7px solid #5e5e5e;border-radius:1.4px;background:linear-gradient(#7f93bd,#93a3c8)"></div>
<svg class="a" style="left:1010.6px;top:66px" width="10" height="10" viewBox="0 0 10 10"><path d="M2 5 l2.2 2.6 l4 -6" stroke="#121a33" stroke-width="1.5" fill="none"/></svg>
<div class="a fld" style="left:1023px;top:66.2px;width:207.6px;height:10.6px"></div>
<div class="a" style="left:1025.6px;top:70.8px;width:4px;height:0.8px;background:#8a8a8a"></div>
<div class="a" style="left:1234.3px;top:67.6px;width:7.8px;height:7.8px;box-sizing:border-box;border:0.7px solid #7a7a7a;border-radius:1.4px;background:linear-gradient(#b6b6b6,#a6a6a6)"></div>
<div class="a lab" style="left:1245px;top:66.6px">Static</div>
<div class="a tri d" style="left:1270px;top:69.6px;border-left-width:2.6px;border-right-width:2.6px;border-top-width:3.4px;border-top-color:#222"></div>
<div class="a lab" style="left:1005.6px;top:79.8px">Tag</div>
<div class="a dd" style="left:1023px;top:79.8px;width:115.6px"></div>
<div class="a mini" style="left:1026.6px;top:80.4px;font-weight:bold;font-size:5.85px">Untagged</div>
<div class="a mini" style="left:1132.2px;top:80.2px;font-size:5.4px;color:#222">&#8645;</div>
<div class="a lab" style="left:1142.4px;top:79.8px">Layer</div>
<div class="a dd" style="left:1168.6px;top:79.8px;width:107px"></div>
<div class="a mini" style="left:1172.4px;top:80.4px;font-weight:bold;font-size:5.85px">Default</div>
<div class="a mini" style="left:1269.4px;top:80.2px;font-size:5.4px;color:#222">&#8645;</div>
<div class="a lab" style="left:989.8px;top:92.6px;color:#7e7e7e">Multiple</div>
<div class="a" style="left:1023px;top:93.6px;width:252.6px;height:9.6px;box-sizing:border-box;border:0.7px solid #8e8e8e;border-radius:2px;background:#a0a0a0"></div>
<div class="a mini" style="left:1096.6px;top:94.1px;color:#868686;font-size:6.3px;letter-spacing:.28px;-webkit-text-stroke:0">Instance Management Disabled</div>
<div class="a" style="left:982px;top:106.4px;width:298px;height:0.9px;background:#6e6e6e"></div>
<div class="a" style="left:982px;top:107.3px;width:298px;height:0.7px;background:#aaaaaa"></div>
<!-- transform -->
<div class="a tri d" style="left:985px;top:111.6px;border-top-color:#666"></div>
<svg class="a" style="left:992.6px;top:108.4px" width="10" height="10" viewBox="0 0 10 10"><path d="M5 5.4 V1.2" stroke="#b7c23a" stroke-width="1.5"/><path d="M5 5.4 L1.4 7.8" stroke="#3e9ad0" stroke-width="1.5"/><path d="M5 5.4 L8.8 7.8" stroke="#d04a3a" stroke-width="1.5"/></svg>
<div class="a" style="left:1015px;top:109px;font-weight:bold;font-size:7.4px;line-height:10px;letter-spacing:.25px">Transform</div>
<svg class="a" style="left:1257.6px;top:108.6px" width="21" height="10" viewBox="0 0 21 10">
  <rect x="0.8" y="0.8" width="7.8" height="8.2" rx="1.2" fill="#4f78c0" stroke="#2e4a86" stroke-width="0.6"/><rect x="2.4" y="1.6" width="5.4" height="6.6" rx="0.8" fill="#9db9e6"/><path d="M4.6 3 h1.6 v1.4 l-1 .8 v.8" stroke="#2f4f94" stroke-width="0.8" fill="none"/>
  <circle cx="15.6" cy="4.8" r="2.2" fill="none" stroke="#2a2a2a" stroke-width="1.5"/><path d="M15.6 1.2 v1 M15.6 7.4 v1 M12 4.8 h1 M18.2 4.8 h1 M13.1 2.3 l.7 .7 M17.4 6.6 l.7 .7 M13.1 7.3 l.7 -.7 M17.4 3 l.7 -.7" stroke="#2a2a2a" stroke-width="1"/><path d="M19.2 7.6 l.8 1 l.8 -1z" fill="#2a2a2a"/>
</svg>
<div class="a lab" style="left:992px;top:119.7px">Position</div>
<div class="a lab" style="left:1099.6px;top:119.7px">X</div>
<div class="a fld" style="left:1107px;top:119.4px;width:48.8px"></div>
<div class="a" style="left:1109.6px;top:124.2px;width:4px;height:0.8px;background:#8a8a8a"></div>
<div class="a lab" style="left:1160px;top:119.7px">Y</div>
<div class="a fld" style="left:1167.4px;top:119.4px;width:48.8px"></div>
<div class="a" style="left:1170.0px;top:124.2px;width:4px;height:0.8px;background:#8a8a8a"></div>
<div class="a lab" style="left:1220.4px;top:119.7px">Z</div>
<div class="a fld" style="left:1227.6px;top:119.4px;width:48.8px"></div>
<div class="a" style="left:1230.2px;top:124.2px;width:4px;height:0.8px;background:#8a8a8a"></div>
<div class="a lab" style="left:992px;top:131.6px">Rotation</div>
<div class="a lab" style="left:1099.6px;top:131.6px">X</div>
<div class="a fld" style="left:1107px;top:131.3px;width:48.8px"></div>
<div class="a" style="left:1109.6px;top:136.1px;width:4px;height:0.8px;background:#8a8a8a"></div>
<div class="a lab" style="left:1160px;top:131.6px">Y</div>
<div class="a fld" style="left:1167.4px;top:131.3px;width:48.8px"></div>
<div class="a" style="left:1170.0px;top:136.1px;width:4px;height:0.8px;background:#8a8a8a"></div>
<div class="a lab" style="left:1220.4px;top:131.6px">Z</div>
<div class="a fld" style="left:1227.6px;top:131.3px;width:48.8px"></div>
<div class="a" style="left:1230.2px;top:136.1px;width:4px;height:0.8px;background:#8a8a8a"></div>
<div class="a lab" style="left:992px;top:143.5px">Scale</div>
<div class="a lab" style="left:1099.6px;top:143.5px">X</div>
<div class="a fld" style="left:1107px;top:143.2px;width:48.8px"></div>
<div class="a" style="left:1109.6px;top:148.0px;width:4px;height:0.8px;background:#8a8a8a"></div>
<div class="a lab" style="left:1160px;top:143.5px">Y</div>
<div class="a fld" style="left:1167.4px;top:143.2px;width:48.8px"></div>
<div class="a" style="left:1170.0px;top:148.0px;width:4px;height:0.8px;background:#8a8a8a"></div>
<div class="a lab" style="left:1220.4px;top:143.5px">Z</div>
<div class="a fld" style="left:1227.6px;top:143.2px;width:48.8px"></div>
<div class="a" style="left:1230.2px;top:148.0px;width:4px;height:0.8px;background:#8a8a8a"></div>
<div class="a" style="left:982px;top:157px;width:298px;height:0.9px;background:#6e6e6e"></div>
<div class="a" style="left:982px;top:157.9px;width:298px;height:0.7px;background:#aaaaaa"></div>
<div class="a" style="left:984.4px;top:162px;width:292.8px;height:11.2px;box-sizing:border-box;border:0.7px solid #868686;border-radius:2px;background:#a5a5a5"></div>
<div class="a" style="left:987px;top:164.4px;font-size:6.57px;line-height:9px;color:#1e1e1e">Components that are only on some of the selected objects cannot be multi-edited.</div>
<div class="a" style="left:982px;top:175.8px;width:298px;height:0.9px;background:#767676"></div>
<div class="a btn" style="left:1052.6px;top:183.6px;width:153.6px;height:14.4px;border-color:#5c5c5c;border-radius:2px;background:linear-gradient(#c9c9c9,#aeaeae)"></div>
<div class="a" style="left:1095.4px;top:185.8px;font-size:8.44px;line-height:10.6px;color:#181818">Add Component</div>
<!--INSPECTOR_END-->

<!-- ===== Status bar ===== -->
<div class="a" style="left:0;top:704.6px;width:1280px;height:14px;background:#838383"></div>
<div class="a" style="left:1137.5px;top:706px;width:124.6px;height:12.4px;box-sizing:border-box;background:#9c9c9c;border:0.7px solid #767676;border-left:1px solid #6f8fd8"></div>
<div class="a" style="left:1157px;top:709px;font-size:6.45px;line-height:9px;color:#141414;-webkit-text-stroke:0.3px #141414">Bake paused in play mode</div>
<div class="a" style="left:0;top:718.3px;width:1280px;height:1.7px;background:#17222c"></div>

<!--STATUS_END-->

</div>
</body>
</html>
